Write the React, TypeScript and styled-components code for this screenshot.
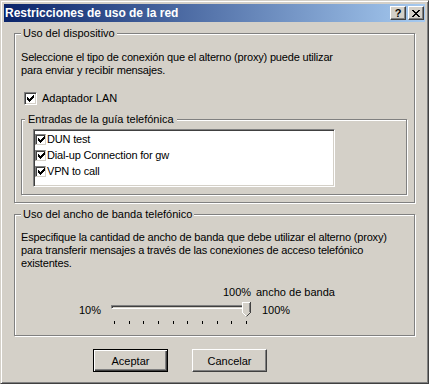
import styled, { createGlobalStyle } from 'styled-components';

const GlobalStyle = createGlobalStyle`
  * {
    box-sizing: border-box;
  }
  html,
  body {
    margin: 0;
    padding: 0;
    background: #d4d0c8;
  }
  body {
    font-family: "Liberation Sans", Arial, sans-serif;
    font-size: 11px;
    color: #000;
  }
`;

const Window = styled.div`
  width: 429px;
  height: 384px;
  display: flex;
  flex-direction: column;
  background: #d4d0c8;
  border: 1px solid;
  border-color: #d4d0c8 #404040 #404040 #d4d0c8;
  box-shadow: inset 1px 1px #fff, inset -1px -1px #808080;
  padding: 3px;
`;

const TitleBar = styled.div`
  height: 18px;
  display: flex;
  align-items: center;
  padding: 0 1px 0 1px;
  background: linear-gradient(to right, #0a246a, #a6caf0);
`;

const Title = styled.div`
  flex: 1;
  color: #fff;
  font-weight: bold;
  font-size: 12px;
  white-space: nowrap;
`;

const CaptionButton = styled.div<{ $gap?: boolean }>`
  width: 16px;
  height: 14px;
  margin-right: ${({ $gap }) => ($gap ? '2px' : '0')};
  display: flex;
  align-items: center;
  justify-content: center;
  background: #d4d0c8;
  border: 1px solid;
  border-color: #fff #404040 #404040 #fff;
  box-shadow: inset -1px -1px #808080, inset 1px 1px #d4d0c8;
  font-weight: bold;
  font-size: 11px;
  line-height: 12px;
`;

const Body = styled.div`
  flex: 1;
  display: flex;
  flex-direction: column;
  padding: 11px 10px 0 10px;
`;

const Group = styled.div<{ $height: number; $padTop: number; $mt?: number }>`
  position: relative;
  height: ${({ $height }) => $height}px;
  margin-top: ${({ $mt }) => $mt ?? 0}px;
  padding: ${({ $padTop }) => $padTop}px 8px 0 6px;
  border: 1px solid #808080;
  box-shadow: inset 1px 1px #fff, 1px 1px #fff;
  display: flex;
  flex-direction: column;
`;

const InnerGroup = styled(Group)`
  padding: 9px 0 0 11px;
  margin-right: -1px;
`;

const Legend = styled.span<{ $left: number; $pad: number }>`
  position: absolute;
  top: -7px;
  left: ${({ $left }) => $left}px;
  padding: 0 ${({ $pad }) => $pad}px;
  background: #d4d0c8;
  line-height: 13px;
  white-space: nowrap;
`;

const Text = styled.p`
  margin: 0;
  line-height: 13px;
  letter-spacing: -0.18px;
  white-space: nowrap;
`;

const CheckRow = styled.label`
  display: flex;
  align-items: center;
  gap: 5px;
  margin: 15px 0 0 3px;
  line-height: 13px;
`;

const CheckBox = styled.span`
  width: 13px;
  height: 13px;
  display: flex;
  align-items: center;
  justify-content: center;
  background: #fff;
  border: 1px solid;
  border-color: #808080 #fff #fff #808080;
  box-shadow: inset 1px 1px #404040, inset -1px -1px #d4d0c8;
`;

const SmallCheck = styled.span`
  width: 11px;
  height: 11px;
  display: flex;
  align-items: center;
  justify-content: center;
  background: #fff;
  border: 1px solid;
  border-color: #808080 #d4d0c8 #d4d0c8 #808080;
  box-shadow: inset 1px 1px #404040;
  padding: 1px 0 0 1px;
`;

const ListBox = styled.div`
  width: 302px;
  height: 58px;
  background: #fff;
  border: 1px solid;
  border-color: #808080 #fff #fff #808080;
  box-shadow: inset 1px 1px #404040, inset -1px -1px #d4d0c8;
  padding: 1px;
  display: flex;
  flex-direction: column;
`;

const ListRow = styled.div`
  height: 16px;
  display: flex;
  align-items: center;
  gap: 1px;
  letter-spacing: -0.18px;
`;

const SliderLabels = styled.div`
  display: flex;
  margin-top: 16px;
  padding-left: 202px;
  line-height: 13px;
`;

const ValueLabel = styled.span`
  width: 33px;
`;

const SliderRow = styled.div`
  display: flex;
  align-items: flex-start;
  margin-top: 3px;
  padding-left: 58px;
  line-height: 13px;
`;

const MinLabel = styled.span`
  width: 29px;
  margin-top: 2px;
`;

const MaxLabel = styled.span`
  margin: 2px 0 0 9px;
`;

const Trackbar = styled.div`
  position: relative;
  width: 145px;
  height: 24px;
  display: flex;
  flex-direction: column;
`;

const Channel = styled.div`
  width: 138px;
  height: 4px;
  margin: 3px 0 0 3px;
  border: 1px solid;
  border-color: #808080 #fff #fff #808080;
  box-shadow: inset 1px 1px #404040, inset -1px -1px #d4d0c8;
`;

const Thumb = styled.svg`
  position: absolute;
  left: 134px;
  top: 0;
`;

const Ticks = styled.div`
  width: 133px;
  margin: 12px 0 0 6px;
  display: flex;
  justify-content: space-between;
`;

const Tick = styled.span`
  width: 1px;
  height: 3px;
  background: #000;
`;

const ButtonRow = styled.div`
  display: flex;
  gap: 24px;
  margin-top: 13px;
  padding-left: 79px;
`;

const Button = styled.button<{ $default?: boolean }>`
  width: 75px;
  height: 23px;
  padding: 0;
  font: inherit;
  color: #000;
  background: #d4d0c8;
  border: 1px solid;
  border-color: ${({ $default }) => ($default ? '#000' : '#fff #404040 #404040 #fff')};
  box-shadow: ${({ $default }) =>
    $default
      ? 'inset 1px 1px #fff, inset -1px -1px #404040, inset -2px -2px #808080'
      : 'inset -1px -1px #808080, inset 1px 1px #d4d0c8'};
`;

const CHECK = [
  [6, 0, 1],
  [5, 1, 2],
  [0, 2, 1],
  [4, 2, 3],
  [0, 3, 2],
  [3, 3, 3],
  [0, 4, 5],
  [1, 5, 3],
  [2, 6, 1],
];

function CheckMark() {
  return (
    <svg width="7" height="7" viewBox="0 0 7 7" shapeRendering="crispEdges">
      {CHECK.map(([x, y, w]) => (
        <rect key={`${x}-${y}`} x={x} y={y} width={w} height={1} fill="#000" />
      ))}
    </svg>
  );
}

const CLOSE = [
  [0, 0, 2],
  [6, 0, 2],
  [1, 1, 2],
  [5, 1, 2],
  [2, 2, 4],
  [3, 3, 2],
  [2, 4, 4],
  [1, 5, 2],
  [5, 5, 2],
  [0, 6, 2],
  [6, 6, 2],
];

function CloseGlyph() {
  return (
    <svg width="8" height="7" viewBox="0 0 8 7" shapeRendering="crispEdges">
      {CLOSE.map(([x, y, w]) => (
        <rect key={`${x}-${y}`} x={x} y={y} width={w} height={1} fill="#000" />
      ))}
    </svg>
  );
}

const entries = ['DUN test', 'Dial-up Connection for gw', 'VPN to call'];

export default function App() {
  return (
    <>
      <GlobalStyle />
      <Window>
        <TitleBar>
          <Title>Restricciones de uso de la red</Title>
          <CaptionButton $gap>?</CaptionButton>
          <CaptionButton>
            <CloseGlyph />
          </CaptionButton>
        </TitleBar>
        <Body>
          <Group $height={170} $padTop={17}>
            <Legend $left={6} $pad={2}>Uso del dispositivo</Legend>
            <Text>
              Seleccione el tipo de conexión que el alterno (proxy) puede utilizar
              <br />
              para enviar y recibir mensajes.
            </Text>
            <CheckRow>
              <CheckBox>
                <CheckMark />
              </CheckBox>
              Adaptador LAN
            </CheckRow>
            <InnerGroup $height={76} $padTop={9} $mt={14}>
              <Legend $left={3} $pad={3}>Entradas de la guía telefónica</Legend>
              <ListBox>
                {entries.map((e) => (
                  <ListRow key={e}>
                    <SmallCheck>
                      <CheckMark />
                    </SmallCheck>
                    {e}
                  </ListRow>
                ))}
              </ListBox>
            </InnerGroup>
          </Group>
          <Group $height={122} $padTop={16} $mt={11}>
            <Legend $left={6} $pad={2}>Uso del ancho de banda telefónico</Legend>
            <Text>
              Especifique la cantidad de ancho de banda que debe utilizar el alterno (proxy)
              <br />
              para transferir mensajes a través de las conexiones de acceso telefónico
              <br />
              existentes.
            </Text>
            <SliderLabels>
              <ValueLabel>100%</ValueLabel>
              <span>ancho de banda</span>
            </SliderLabels>
            <SliderRow>
              <MinLabel>10%</MinLabel>
              <Trackbar>
                <Channel />
                <Ticks>
                  {Array.from({ length: 10 }, (_, i) => (
                    <Tick key={i} />
                  ))}
                </Ticks>
                <Thumb width="9" height="15" viewBox="0 0 9 15" shapeRendering="crispEdges">
                  <path d="M0 0H9V10L4.5 14.5L0 10Z" fill="#d4d0c8" />
                  <path d="M0.5 10.5V0.5H8" stroke="#fff" fill="none" />
                  <path d="M0.5 10.5L4.5 14.5" stroke="#fff" fill="none" shapeRendering="auto" />
                  <path d="M8.5 0V10.5" stroke="#404040" fill="none" />
                  <path d="M8.5 10.5L4.5 14.5" stroke="#404040" fill="none" shapeRendering="auto" />
                  <path d="M7.5 1V10" stroke="#808080" fill="none" />
                </Thumb>
              </Trackbar>
              <MaxLabel>100%</MaxLabel>
            </SliderRow>
          </Group>
          <ButtonRow>
            <Button $default>Aceptar</Button>
            <Button>Cancelar</Button>
          </ButtonRow>
        </Body>
      </Window>
    </>
  );
}
